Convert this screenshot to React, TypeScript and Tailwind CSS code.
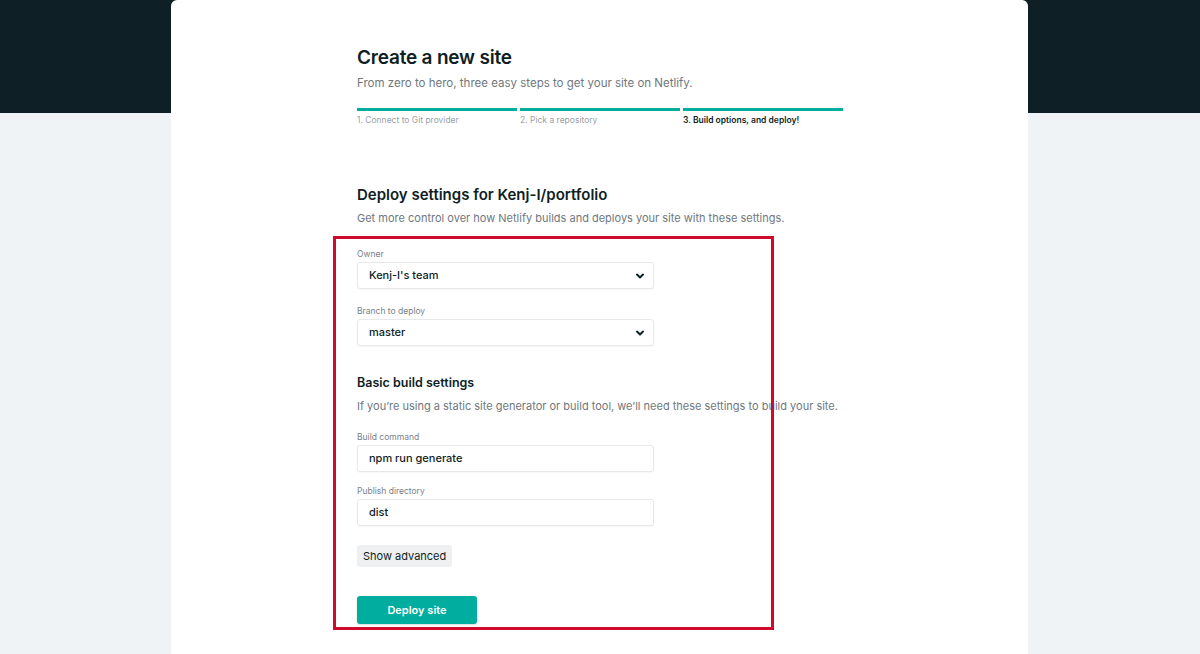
import React from "react";

function Chevron() {
  return (
    <svg width="10" height="10" viewBox="0 0 10 10" className="text-[#0e1e25]">
      <path d="M2 3.6 L5 6.4 L8 3.6" fill="none" stroke="currentColor" strokeWidth="2" strokeLinecap="round" strokeLinejoin="round" />
    </svg>
  );
}

function Label({ children }: { children: React.ReactNode }) {
  return <div className="text-[8.5px] leading-[12px] text-[#7a8288] mb-[2px]">{children}</div>;
}

function SelectBox({ value }: { value: string }) {
  return (
    <div className="w-[297px] h-[27px] bg-white border border-[#e6e8ea] rounded-[3px] shadow-[0_1px_2px_rgba(0,0,0,0.04)] flex items-center justify-between pl-[11px] pr-[8px]">
      <span className="text-[11px] font-medium text-[#0e1e25]">{value}</span>
      <Chevron />
    </div>
  );
}

function InputBox({ value }: { value: string }) {
  return (
    <div className="w-[297px] h-[27px] bg-white border border-[#e6e8ea] rounded-[3px] shadow-[0_1px_2px_rgba(0,0,0,0.04)] flex items-center pl-[11px]">
      <span className="text-[11px] font-medium text-[#0e1e25]">{value}</span>
    </div>
  );
}

export default function App() {
  return (
    <div
      className="min-h-screen w-full bg-[linear-gradient(to_bottom,#0f1f26_0,#0f1f26_113px,#f0f3f6_113px)]"
      style={{ fontFamily: "Inter, 'Noto Sans', sans-serif" }}
    >
      <div className="ml-[171px] w-[857px] min-h-[654px] bg-white rounded-t-[6px] pl-[186px] pt-[44px]">
        <div className="w-[486px]">
          <h1 className="text-[19px] leading-[28px] font-semibold text-[#0e1e25] tracking-[-0.2px]">Create a new site</h1>
          <p className="mt-[2px] text-[11.5px] leading-[18px] text-[#6f777d]">
            From zero to hero, three easy steps to get your site on Netlify.
          </p>
          <div className="mt-[16px] grid grid-cols-3 gap-[3px]">
            {[
              { t: "1. Connect to Git provider", a: false },
              { t: "2. Pick a repository", a: false },
              { t: "3. Build options, and deploy!", a: true },
            ].map((s) => (
              <div key={s.t}>
                <div className="h-[3px] bg-[#00ad9f]" />
                <div
                  className={
                    s.a
                      ? "mt-[3px] text-[8.5px] leading-[12px] font-semibold text-[#0e1e25]"
                      : "mt-[3px] text-[8.5px] leading-[12px] text-[#9aa0a5]"
                  }
                >
                  {s.t}
                </div>
              </div>
            ))}
          </div>

          <h2 className="mt-[58px] text-[15px] leading-[22px] font-semibold text-[#0e1e25]">
            Deploy settings for Kenj-I/portfolio
          </h2>
          <p className="mt-[3px] text-[11px] leading-[18px] text-[#6f777d]">
            Get more control over how Netlify builds and deploys your site with these settings.
          </p>

          <div className="relative mt-[21px]">
            <div className="pointer-events-none absolute left-[-24px] top-[-12px] w-[441px] h-[394px] border-[3px] border-[#cf0a2c]" />
            <Label>Owner</Label>
            <SelectBox value="Kenj-I's team" />
            <div className="mt-[16px]">
              <Label>Branch to deploy</Label>
              <SelectBox value="master" />
            </div>
            <h3 className="mt-[27px] text-[12.5px] leading-[20px] font-semibold text-[#0e1e25]">Basic build settings</h3>
            <p className="mt-[4px] text-[11px] leading-[18px] text-[#6f777d] whitespace-nowrap">
              If you’re using a static site generator or build tool, we’ll need these settings to build your site.
            </p>
            <div className="mt-[16px]">
              <Label>Build command</Label>
              <InputBox value="npm run generate" />
            </div>
            <div className="mt-[13px]">
              <Label>Publish directory</Label>
              <InputBox value="dist" />
            </div>
            <div className="mt-[19px] inline-flex h-[22px] items-center px-[6px] rounded-[3px] bg-[#eef0f2] text-[11px] text-[#0e1e25]">
              Show advanced
            </div>
            <div className="mt-[29px]">
              <div className="inline-flex w-[120px] h-[28px] items-center justify-center rounded-[3px] bg-[#00ad9f] text-[11px] font-semibold text-white shadow-[0_1px_2px_rgba(0,0,0,0.15)]">
                Deploy site
              </div>
            </div>
          </div>
        </div>
      </div>
    </div>
  );
}
